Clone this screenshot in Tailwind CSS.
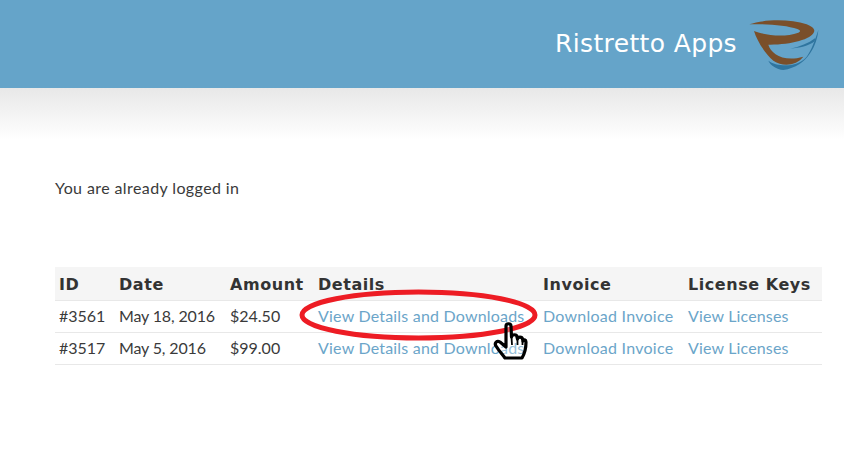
<!DOCTYPE html>
<html lang="en">
<head>
    <meta charset="UTF-8">
    <meta name="viewport" content="width=device-width, initial-scale=1.0">
    <title>Ristretto Apps</title>
    <script src="https://cdn.jsdelivr.net/npm/@tailwindcss/browser@4"></script>
</head>
<body class="relative w-[844px] h-[449px] overflow-hidden bg-white font-['Lato',sans-serif] text-[16px] text-[#3a3a3a]">
    <!-- Header -->
    <header class="h-[88px] bg-[#65a4c9] flex items-center justify-end pr-[14px]">
        <span class="font-['DejaVu_Sans',sans-serif] text-[25px] text-white mr-[3px] tracking-[0.36px]">Ristretto Apps</span>
        <svg class="w-[90px] h-[70px] mt-[2px]" viewBox="0 0 270 210">
            <path fill="#7a4f2a" d="M28 43C70 28 150 26 200 43C216 49 226 58 222 66C215 88 150 105 85 104C92 130 130 158 190 140C170 166 130 172 100 152C75 132 50 90 42 63C70 74 130 84 175 68C184 64 180 60 172 57C140 46 80 41 28 43Z"/>
            <path fill="#2f759f" d="M235 60C232 100 205 170 130 180C110 178 90 165 85 152C110 170 170 175 200 140C215 120 225 90 235 60Z"/>
            <path fill="#2f759f" d="M226 84C205 100 180 110 150 116C180 114 205 108 224 94Z"/>
        </svg>
    </header>
    <div class="h-[52px] bg-gradient-to-b from-[#e8e8e8] to-white"></div>

    <main class="pl-[55px] pr-[22px]">
        <p class="mt-[37px] leading-[22px] tracking-[0.4px]">You are already logged in</p>

        <table class="mt-[68px] w-[767px] table-fixed border-collapse">
            <thead>
                <tr class="h-[33px] bg-[#f5f5f5] border-b border-[#e8e8e8] text-left font-['DejaVu_Sans',sans-serif] text-[16px] tracking-[0.55px] text-[#333]">
                    <th class="w-[59px] pl-[4px] pt-[4px] font-bold">ID</th>
                    <th class="w-[111px] pl-[5px] pt-[4px] font-bold">Date</th>
                    <th class="w-[88px] pl-[5px] pt-[4px] font-bold">Amount</th>
                    <th class="w-[225px] pl-[5px] pt-[4px] font-bold">Details</th>
                    <th class="w-[145px] pl-[5px] pt-[4px] font-bold">Invoice</th>
                    <th class="pl-[5px] pt-[4px] font-bold">License Keys</th>
                </tr>
            </thead>
            <tbody>
                <tr class="h-[32px] border-b border-[#e8e8e8]">
                    <td class="pl-[4px]">#3561</td>
                    <td class="pl-[5px] tracking-[-0.15px]">May 18, 2016</td>
                    <td class="pl-[5px]">$24.50</td>
                    <td class="pl-[5px]"><a href="#" class="text-[#6ba5c9] tracking-[0.2px]">View Details and Downloads</a></td>
                    <td class="pl-[5px]"><a href="#" class="text-[#6ba5c9] tracking-[0.25px]">Download Invoice</a></td>
                    <td class="pl-[5px]"><a href="#" class="text-[#6ba5c9] tracking-[0.15px]">View Licenses</a></td>
                </tr>
                <tr class="h-[32px] border-b border-[#e8e8e8]">
                    <td class="pl-[4px]">#3517</td>
                    <td class="pl-[5px] tracking-[-0.15px]">May 5, 2016</td>
                    <td class="pl-[5px]">$99.00</td>
                    <td class="pl-[5px]"><a href="#" class="text-[#6ba5c9] tracking-[0.2px]">View Details and Downloads</a></td>
                    <td class="pl-[5px]"><a href="#" class="text-[#6ba5c9] tracking-[0.25px]">Download Invoice</a></td>
                    <td class="pl-[5px]"><a href="#" class="text-[#6ba5c9] tracking-[0.15px]">View Licenses</a></td>
                </tr>
            </tbody>
        </table>
    </main>

    <!-- Red annotation ring and hand cursor -->
    <svg class="absolute left-0 top-0 w-[844px] h-[449px] pointer-events-none" viewBox="0 0 844 449">
        <ellipse cx="418.5" cy="315" rx="116.5" ry="23" fill="none" stroke="#ed1c24" stroke-width="5"/>
        <path fill="#fff" fill-opacity="0.3" stroke="#000" stroke-width="3.2" stroke-linejoin="round" d="M506 326C506 323 511 323 511 326L511.500 337C512 334 517 334 517 337L517.500 339C518 336.500 522 336.500 522.500 339L523 341C523.500 339 526 339.500 526 342C526 348 525 353 522 358L505 358C503 355 499 351 496 346C494 343 497 340 500 342L506 347Z"/>
        <path fill="none" stroke="#000" stroke-width="1.800" d="M511.500 337L512 345M517.500 339L517.500 345M522.500 341L522.500 345"/>
    </svg>
</body>
</html>
